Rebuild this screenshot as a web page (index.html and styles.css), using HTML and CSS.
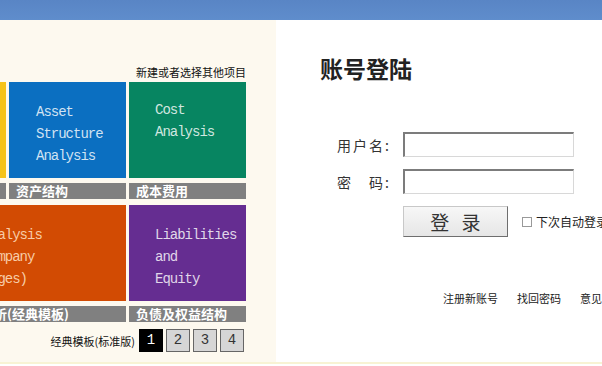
FILE: index.html
```html
<!DOCTYPE html>
<html lang="zh-CN">
<head>
  <meta charset="UTF-8" />
  <meta name="viewport" content="width=device-width, initial-scale=1.0" />
  <title>账号登陆</title>

  <link rel="stylesheet" href="styles.css">
</head>
<body>

  <div class="topbar"></div>

  <div class="main">

    <!-- project templates -->
    <div class="projects">
      <div class="projects-inner">
        <div class="new-project">新建或者选择其他项目</div>

        <div class="tiles">
          <div class="cell">
            <div class="tile yellow">Profit<br>Analysis</div>
            <div class="tag">利润分析</div>
          </div>
          <div class="cell">
            <div class="tile blue">Asset<br>Structure<br>Analysis</div>
            <div class="tag">资产结构</div>
          </div>
          <div class="cell">
            <div class="tile green">Cost<br>Analysis</div>
            <div class="tag">成本费用</div>
          </div>
          <div class="cell wide">
            <div class="tile orange">Business Analysis<br>Business Company<br>(Summary Pages)</div>
            <div class="tag tag-shift">企业财务报表分析(经典模板)</div>
          </div>
          <div class="cell">
            <div class="tile purple">Liabilities<br>and<br>Equity</div>
            <div class="tag">负债及权益结构</div>
          </div>
        </div>

        <div class="pager">
          <span class="pager-label">经典模板(标准版)</span>
          <a class="page current">1</a>
          <a class="page">2</a>
          <a class="page">3</a>
          <a class="page">4</a>
        </div>
      </div>
    </div>

    <!-- login -->
    <div class="login">
      <h1>账号登陆</h1>

      <div class="form-row">
        <label for="user">用户名:</label>
        <input type="text" id="user" />
      </div>
      <div class="form-row">
        <label for="pass">密　码:</label>
        <input type="password" id="pass" />
      </div>
      <div class="form-row">
        <span class="spacer"></span>
        <button class="login-btn">登 录</button>
        <span class="remember"><span class="box"></span>下次自动登录</span>
      </div>

      <div class="links">
        <a>注册新账号</a>
        <a>找回密码</a>
        <a>意见反馈</a>
      </div>
    </div>

  </div>

</body>
</html>
```

FILE: styles.css
```css
* {
  box-sizing: border-box;
}

body {
  margin: 0;
  width: 602px;
  height: 366px;
  overflow: hidden;
  font-family: "Noto Sans CJK SC", "DejaVu Sans", sans-serif;
  color: #222;
  background: #fff;
}

.topbar {
  height: 20px;
  background: linear-gradient(#5985c5, #5f8dcc);
}

.main {
  display: flex;
  height: 344px;
  border-bottom: 2px solid #f8f3d4;
}

/* left: templates */

.projects {
  width: 276px;
  flex-shrink: 0;
  background: #fdf9ef;
  overflow: hidden;
  padding-top: 44px;
}

.projects-inner {
  width: 357px;
  margin-left: -111px;
}

.new-project {
  text-align: right;
  font-size: 11px;
  line-height: 16px;
  margin-bottom: 2px;
  color: #111;
}

.tiles {
  display: grid;
  grid-template-columns: repeat(3, 117px);
  column-gap: 3px;
  row-gap: 6px;
}

.cell.wide {
  grid-column: span 2;
}

.tile {
  height: 96px;
  padding: 17px 0 0 27px;
  font-family: "Liberation Mono", "DejaVu Sans Mono", monospace;
  font-size: 14px;
  letter-spacing: -1px;
  line-height: 22px;
  color: rgba(255, 255, 255, 0.82);
  white-space: nowrap;
  overflow: hidden;
}

.tile.blue { background: #0b6fc1; padding-top: 19px; }
.tile.green { background: #078561; padding-left: 26px; padding-top: 17px; }
.tile.yellow { background: #f5c31a; }
.tile.orange { background: #d24b03; color: rgba(255, 228, 200, 0.85); padding-top: 19px; }
.tile.purple { background: #652d91; padding-left: 26px; padding-top: 19px; }

.tag {
  margin-top: 5px;
  height: 16px;
  line-height: 16px;
  padding-left: 7px;
  background: #808080;
  color: #fff;
  font-size: 13px;
  font-weight: bold;
  white-space: nowrap;
  overflow: hidden;
}

.tag.tag-shift {
  padding-left: 14px;
}

.pager {
  display: flex;
  justify-content: flex-end;
  align-items: center;
  gap: 3px;
  margin-top: 7px;
  padding-right: 2px;
}

.pager-label {
  font-size: 11px;
  margin-right: 1px;
  color: #111;
}

.page {
  width: 24px;
  height: 23px;
  line-height: 21px;
  text-align: center;
  font-family: "Liberation Mono", "DejaVu Sans Mono", monospace;
  font-size: 14px;
  color: #333;
  background: #d6d6d6;
  border: 1px solid #666;
}

.page.current {
  background: #000;
  color: #fff;
  border-color: #000;
}

/* right: login */

.login {
  flex: 1;
  padding: 33px 0 0 44px;
  white-space: nowrap;
}

.login h1 {
  margin: 0 0 49px;
  font-size: 23px;
  line-height: 30px;
  font-weight: bold;
  color: #222;
}

.form-row {
  display: flex;
  align-items: center;
  margin-bottom: 12px;
}

.form-row label,
.spacer {
  width: 72px;
  padding-left: 17px;
  margin-right: 11px;
  font-size: 14px;
  letter-spacing: 2px;
  color: #333;
  flex-shrink: 0;
}

.form-row input {
  width: 171px;
  height: 25px;
  border: 1px solid;
  border-width: 2px 1px 1px 2px;
  border-color: #7c7c7c #d8d8d8 #d8d8d8 #7c7c7c;
  font-size: 14px;
  padding: 0 4px;
  background: #fff;
}

.login-btn {
  width: 105px;
  height: 31px;
  font-family: inherit;
  font-size: 19px;
  letter-spacing: 4px;
  padding: 0 0 0 4px;
  color: #333;
  background: linear-gradient(#f7f7f7, #e6e6e6);
  border: 1px solid #c8c8c8;
  border-right-color: #6e6e6e;
  border-bottom-color: #6e6e6e;
  cursor: pointer;
}

.remember {
  display: flex;
  align-items: center;
  margin-left: 14px;
  font-size: 12px;
  color: #222;
}

.remember .box {
  width: 10px;
  height: 10px;
  border: 1px solid #999;
  background: #fff;
  margin-right: 4px;
}

.links {
  display: flex;
  gap: 19px;
  margin: 53px 0 0 123px;
  font-size: 11px;
  line-height: 16px;
}

.links a {
  color: #222;
  cursor: pointer;
}
```
